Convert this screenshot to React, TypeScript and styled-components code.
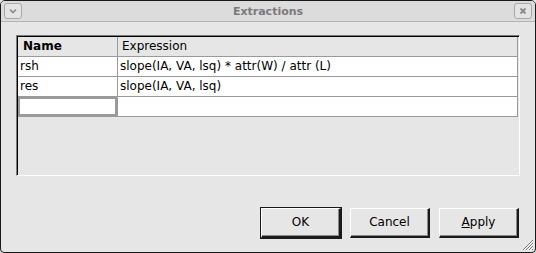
import React from "react";
import styled, { createGlobalStyle } from "styled-components";

const Global = createGlobalStyle`
  html, body { margin: 0; padding: 0; background: #e6e6e6; }
  body { font-family: "DejaVu Sans", "Liberation Sans", sans-serif; font-size: 12px; color: #000; }
`;

const Window = styled.div`
  position: relative;
  box-sizing: border-box;
  width: 536px;
  height: 253px;
  border: 1px solid #1a1a1a;
  border-radius: 5px 5px 4px 4px;
  background: #e6e6e6;
  display: flex;
  flex-direction: column;
  overflow: hidden;
`;

const TitleBar = styled.div`
  height: 20px;
  flex: none;
  background: #dcdcdc;
  border-bottom: 1px solid #b4b4b4;
  display: flex;
  align-items: center;
  justify-content: space-between;
  padding: 0 3px 0 3px;
  position: relative;
`;

const Title = styled.div`
  position: absolute;
  left: 0;
  right: 0;
  text-align: center;
  font-weight: bold;
  font-size: 11px;
  color: #7a7a7a;
  pointer-events: none;
`;

const TitleButton = styled.div`
  width: 16px;
  height: 14px;
  border: 1px solid #a8a8a8;
  border-radius: 3px;
  background: #e4e4e4;
  display: flex;
  align-items: center;
  justify-content: center;
`;

const Body = styled.div`
  flex: 1;
  display: flex;
  flex-direction: column;
  padding: 13px 15px 0 15px;
`;

const Frame = styled.div`
  box-sizing: border-box;
  height: 141px;
  border-style: solid;
  border-width: 1px;
  border-color: #7a7a7a #ffffff #ffffff #7a7a7a;
  box-shadow: inset 1px 1px 0 #000;
  padding: 1px 1px 0 1px;
  background: #e6e6e6;
`;

const Grid = styled.div`
  display: grid;
  grid-template-columns: 100px 400px;
`;

const HeadCell = styled.div<{ $bold?: boolean }>`
  box-sizing: border-box;
  height: 20px;
  line-height: 19px;
  padding-left: ${(p) => (p.$bold ? "5px" : "4px")};
  font-weight: ${(p) => (p.$bold ? "bold" : "normal")};
  border-right: 1px solid #9a9a9a;
  border-bottom: 1px solid #9a9a9a;
  background: #e6e6e6;
  white-space: nowrap;
`;

const Cell = styled.div<{ $editing?: boolean }>`
  box-sizing: border-box;
  height: 20px;
  line-height: 19px;
  padding-left: 2px;
  background: #fff;
  border-right: 1px solid #9a9a9a;
  border-bottom: 1px solid #9a9a9a;
  white-space: nowrap;
  overflow: hidden;
  ${(p) => (p.$editing ? "box-shadow: inset 0 0 0 2px #9a9a9a;" : "")}
`;

const ButtonRow = styled.div`
  margin-top: 32px;
  display: flex;
  justify-content: flex-end;
  gap: 9px;
  padding-right: 1px;
`;

const Button = styled.button<{ $default?: boolean }>`
  box-sizing: border-box;
  width: 80px;
  height: 30px;
  font-family: "DejaVu Sans", "Liberation Sans", sans-serif;
  font-size: 12px;
  color: #000;
  background: #e6e6e6;
  border-style: solid;
  border-width: 1px 2px 2px 1px;
  border-color: #ffffff #1a1a1a #1a1a1a #ffffff;
  box-shadow: ${(p) =>
    p.$default ? "0 0 0 1px #1a1a1a, inset -1px -1px 0 #8a8a8a" : "inset -1px -1px 0 #8a8a8a"};
  padding: 0 0 2px 0;
  outline: none;
`;

const Grip = styled.svg`
  position: absolute;
  right: 1px;
  bottom: 1px;
`;

export default function App() {
  return (
    <>
      <Global />
      <Window>
        <TitleBar>
          <TitleButton>
            <svg width="10" height="8" viewBox="0 0 10 8">
              <path d="M2 2.5 L5 5.5 L8 2.5" stroke="#8a8a8a" strokeWidth="1.6" fill="none" />
            </svg>
          </TitleButton>
          <Title>Extractions</Title>
          <TitleButton>
            <svg width="10" height="10" viewBox="0 0 10 10">
              <path d="M2.5 2.5 L7.5 7.5 M7.5 2.5 L2.5 7.5" stroke="#8a8a8a" strokeWidth="1.8" fill="none" />
            </svg>
          </TitleButton>
        </TitleBar>
        <Body>
          <Frame>
            <Grid>
              <HeadCell $bold>Name</HeadCell>
              <HeadCell>Expression</HeadCell>
              <Cell>rsh</Cell>
              <Cell>slope(IA, VA, lsq) * attr(W) / attr (L)</Cell>
              <Cell>res</Cell>
              <Cell>slope(IA, VA, lsq)</Cell>
              <Cell $editing />
              <Cell />
            </Grid>
          </Frame>
          <ButtonRow>
            <Button $default>OK</Button>
            <Button>Cancel</Button>
            <Button>
              <u>A</u>pply
            </Button>
          </ButtonRow>
        </Body>
        <Grip width="14" height="14" viewBox="0 0 14 14">
          <path d="M13 3 L3 13 M13 6 L6 13 M13 9 L9 13 M13 12 L12 13" stroke="#7a7a7a" strokeWidth="1" />
          <path d="M13 4 L4 13 M13 7 L7 13 M13 10 L10 13" stroke="#ffffff" strokeWidth="1" />
        </Grip>
      </Window>
    </>
  );
}
